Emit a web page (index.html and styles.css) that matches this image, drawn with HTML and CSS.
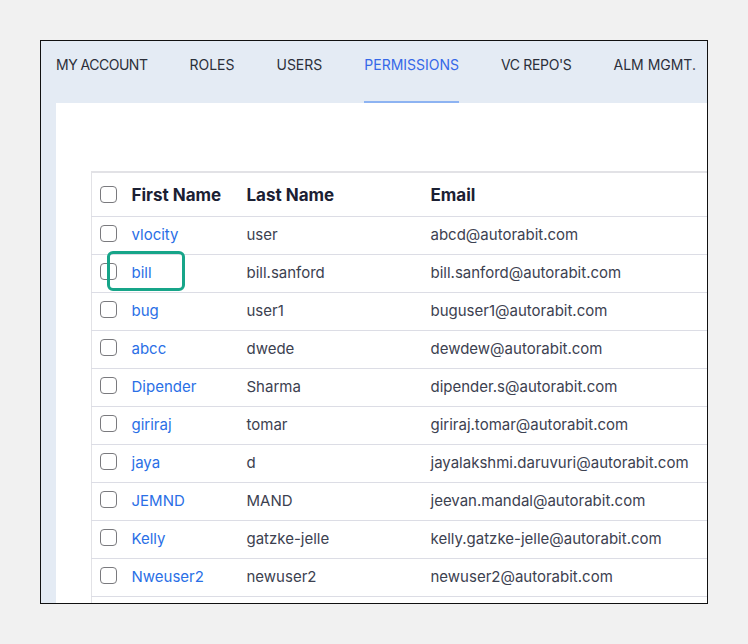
FILE: index.html
```html
<!DOCTYPE html>
<html>
<head>
<meta charset="utf-8">
<link rel="stylesheet" href="styles.css">
</head>
<body>
<div class="frame">
  <nav class="tabs">
    <span class="tab tight">MY ACCOUNT</span>
    <span class="tab">ROLES</span>
    <span class="tab">USERS</span>
    <span class="tab active">PERMISSIONS</span>
    <span class="tab tighter">VC REPO'S</span>
    <span class="tab">ALM MGMT.</span>
  </nav>
  <div class="panel">
    <table class="users">
      <colgroup>
        <col class="c-check"><col class="c-first"><col class="c-last"><col class="c-email">
      </colgroup>
      <thead>
        <tr><th><span class="cb"></span></th><th>First Name</th><th>Last Name</th><th>Email</th></tr>
      </thead>
      <tbody>
        <tr><td><span class="cb"></span></td><td><a>vlocity</a></td><td>user</td><td>abcd@autorabit.com</td></tr>
        <tr><td><span class="cb"></span></td><td><a>bill</a></td><td>bill.sanford</td><td>bill.sanford@autorabit.com</td></tr>
        <tr><td><span class="cb"></span></td><td><a>bug</a></td><td>user1</td><td>buguser1@autorabit.com</td></tr>
        <tr><td><span class="cb"></span></td><td><a>abcc</a></td><td>dwede</td><td>dewdew@autorabit.com</td></tr>
        <tr><td><span class="cb"></span></td><td><a>Dipender</a></td><td>Sharma</td><td>dipender.s@autorabit.com</td></tr>
        <tr><td><span class="cb"></span></td><td><a>giriraj</a></td><td>tomar</td><td>giriraj.tomar@autorabit.com</td></tr>
        <tr><td><span class="cb"></span></td><td><a>jaya</a></td><td>d</td><td>jayalakshmi.daruvuri@autorabit.com</td></tr>
        <tr><td><span class="cb"></span></td><td><a>JEMND</a></td><td>MAND</td><td>jeevan.mandal@autorabit.com</td></tr>
        <tr><td><span class="cb"></span></td><td><a>Kelly</a></td><td>gatzke-jelle</td><td>kelly.gatzke-jelle@autorabit.com</td></tr>
        <tr><td><span class="cb"></span></td><td><a>Nweuser2</a></td><td>newuser2</td><td>newuser2@autorabit.com</td></tr>
        <tr class="spacer"><td></td><td></td><td></td><td></td></tr>
      </tbody>
    </table>
  </div>
  <div class="highlight"></div>
</div>
</body>
</html>
```

FILE: styles.css
```css
* { box-sizing: border-box; }
html, body { margin: 0; padding: 0; }
body {
  background: #f1f1f1;
  font-family: Inter, "Noto Sans", sans-serif;
  width: 748px;
  height: 644px;
  overflow: hidden;
}
.frame {
  position: relative;
  margin: 40px 0 0 40px;
  width: 668px;
  height: 564px;
  border: 1px solid #111;
  background: #e4ebf4;
  overflow: hidden;
  display: flex;
  flex-direction: column;
}
.tabs {
  display: flex;
  gap: 42px;
  padding-left: 15px;
  height: 62px;
  flex-shrink: 0;
  white-space: nowrap;
}
.tab {
  font-size: 14px;
  color: #2b2f3a;
  line-height: 48px;
  height: 62px;
  border-bottom: 2px solid transparent;
}
.tab.tight { letter-spacing: -0.5px; }
.tab.tighter { letter-spacing: -0.35px; }
.tab.active {
  color: #3568e8;
  border-bottom-color: #8db3f2;
}
.panel {
  flex: 1;
  margin-left: 15px;
  background: #fff;
  padding: 68px 0 0 35px;
  overflow: hidden;
}
.users {
  border-collapse: collapse;
  table-layout: fixed;
  width: 700px;
  border-top: 2px solid #e2e2e6;
  border-left: 1px solid #e2e2e6;
}
.c-check { width: 30px; }
.c-first { width: 115px; }
.c-last { width: 184px; }
.c-email { width: 371px; }
.users th, .users td {
  text-align: left;
  padding: 0 0 0 10px;
  border-bottom: 1px solid #dcdde5;
  white-space: nowrap;
}
.users th:first-child, .users td:first-child { padding-left: 8px; }
.users th {
  height: 44px;
  padding-top: 2px;
  font-size: 17px;
  font-weight: 700;
  color: #1b2033;
}
.users td {
  height: 38px;
  padding-bottom: 2px;
  font-size: 15px;
  color: #3c4150;
}
.users a { color: #2a6fe6; }
.cb {
  display: block;
  width: 17px;
  height: 17px;
  border: 1.5px solid #7a7a7e;
  border-radius: 4px;
  background: #fff;
  margin-top: -2px;
}
.highlight {
  position: absolute;
  left: 66px;
  top: 210px;
  width: 78px;
  height: 40px;
  border: 3px solid #17a589;
  border-radius: 6px;
}
```
